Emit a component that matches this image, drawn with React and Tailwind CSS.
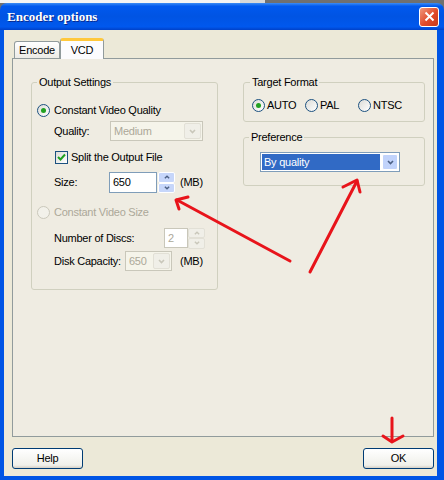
import React from 'react';

const font = "font-['Liberation_Sans',Arial,sans-serif]";

function Chevron({ dir = 'down', color = '#4D6185', size = 7 }) {
  const d = dir === 'down' ? 'M1 2 L3.5 4.5 L6 2' : 'M1 5 L3.5 2.5 L6 5';
  return (
    <svg width={size} height={size} viewBox="0 0 7 7">
      <path d={d} fill="none" stroke={color} strokeWidth="1.6" />
    </svg>
  );
}

function Radio({ checked, disabled }) {
  return (
    <span
      className={`w-[13px] h-[13px] rounded-full border flex items-center justify-center shrink-0 ${
        disabled
          ? 'border-[#CAC8BB] bg-[#F2F1EA]'
          : 'border-[#1C5180] bg-[linear-gradient(135deg,#DCDCD7,#FFFFFF)]'
      }`}
    >
      {checked && <span className="w-[5px] h-[5px] rounded-full bg-[#21A121]" />}
    </span>
  );
}

function Checkbox() {
  return (
    <span className="w-[13px] h-[13px] border border-[#1C5180] bg-[linear-gradient(135deg,#DCDCD7,#FFFFFF)] flex items-center justify-center shrink-0">
      <svg width="9" height="9" viewBox="0 0 9 9">
        <path d="M1 4 L3.5 6.5 L8 1.5" fill="none" stroke="#21A121" strokeWidth="2" />
      </svg>
    </span>
  );
}

function Combo({ value, width, disabled }) {
  return (
    <div
      className={`h-[20px] border flex items-stretch ${
        disabled ? 'border-[#C9C7BA] bg-[#F5F4EA]' : 'border-[#7F9DB9] bg-white'
      }`}
      style={{ width }}
    >
      <div className={`flex-1 flex items-center pl-[3px] ${disabled ? 'text-[#ACA899]' : ''}`}>{value}</div>
      <div
        className={`w-[17px] m-px rounded-[2px] flex items-center justify-center ${
          disabled ? 'bg-[#F0EFE8] border border-[#E2E0D6]' : 'bg-[#C1D3FB] border border-white'
        }`}
      >
        <Chevron color={disabled ? '#C9C7BA' : '#4D6185'} />
      </div>
    </div>
  );
}

function Spin({ disabled }) {
  const cls = disabled
    ? 'bg-[#F0EFE8] border border-[#E2E0D6]'
    : 'bg-[#C6D6FA] border border-white';
  const c = disabled ? '#C9C7BA' : '#4D6185';
  return (
    <div className="w-[17px] h-[21px] flex flex-col">
      <div className={`flex-1 rounded-[2px] flex items-center justify-center ${cls}`}>
        <Chevron dir="up" color={c} size={6} />
      </div>
      <div className={`flex-1 rounded-[2px] flex items-center justify-center ${cls}`}>
        <Chevron dir="down" color={c} size={6} />
      </div>
    </div>
  );
}

function XpButton({ children }) {
  return (
    <div className="w-[71px] h-[21px] rounded-[3px] border border-[#003C74] bg-[linear-gradient(to_bottom,#FFFFFF,#F0F0EA_85%,#D6D0C5)] flex items-center justify-center">
      {children}
    </div>
  );
}

export default function App() {
  return (
    <div className={`w-[444px] h-[480px] relative flex flex-col bg-[#707070] text-[11px] tracking-[-0.25px] text-black ${font}`}>
      <div className="h-[3px] flex">
        <div className="w-[240px] bg-[#F4F4F4]" />
        <div className="w-[25px] bg-[#D8D8D8]" />
        <div className="flex-1 bg-[#707070]" />
      </div>

      <div className="flex-1 flex flex-col rounded-t-[7px] overflow-hidden">
        {/* title bar */}
        <div className="h-[27px] flex items-center justify-between pl-[7px] pr-[5px] bg-[linear-gradient(to_bottom,#3B8CF5_0%,#0058EE_12%,#0054E3_50%,#0058EE_88%,#0041C8_100%)]">
          <span className="font-['Liberation_Serif',serif] font-bold text-[13px] tracking-normal text-white [text-shadow:1px_1px_0_#0A2A8E]">
            Encoder options
          </span>
          <div className="w-[20px] h-[20px] rounded-[3px] border border-white bg-[linear-gradient(135deg,#F0997E,#E04A2A_55%,#C7391A)] flex items-center justify-center">
            <svg width="11" height="11" viewBox="0 0 11 11">
              <path d="M1.5 1.5 L9.5 9.5 M9.5 1.5 L1.5 9.5" stroke="white" strokeWidth="2" />
            </svg>
          </div>
        </div>

        {/* client */}
        <div className="flex-1 flex flex-col bg-[#ECE9D8] border-l-[4px] border-r-[7px] border-b-[4px] border-[#0055E5] pt-[8px] pl-[8px] pr-[3px]">
          {/* tabs */}
          <div className="h-[20px] flex items-end pl-[2px] relative z-10">
            <div className="w-[46px] h-[17px] border border-b-0 border-[#919B9C] rounded-t-[3px] bg-[linear-gradient(to_bottom,#FFFFFF,#ECEBE6)] flex items-center justify-center">
              Encode
            </div>
            <div className="w-[44px] h-[21px] -mb-px border-x border-[#919B9C] border-t-[3px] border-t-[#FFC83C] rounded-t-[3px] bg-[#FCFCFE] flex items-start justify-center pt-[1px]">
              VCD
            </div>
          </div>

          {/* panel */}
          <div className="h-[379px] border border-[#919B9C] bg-[#EFECE2] flex pt-[17px] pl-[18px]">
            <fieldset className="w-[187px] h-[214px] border border-[#D0D0BF] rounded-[3px]">
              <legend className="ml-[5px] px-[2px] leading-[13px]">Output Settings</legend>
              <div className="flex flex-col">
                <div className="h-[20px] mt-[11px] flex items-center pl-[5px] gap-[4px]">
                  <Radio checked />
                  <span>Constant Video Quality</span>
                </div>
                <div className="h-[20px] mt-[1px] flex items-center pl-[22px]">
                  <span className="w-[56px]">Quality:</span>
                  <Combo value="Medium" width={93} disabled />
                </div>
                <div className="h-[20px] mt-[6px] flex items-center pl-[23px] gap-[3px]">
                  <Checkbox />
                  <span>Split the Output File</span>
                </div>
                <div className="h-[21px] mt-[5px] flex items-center pl-[22px]">
                  <span className="w-[55px]">Size:</span>
                  <div className="w-[48px] h-[21px] border border-[#7F9DB9] bg-white flex items-center pl-[3px]">650</div>
                  <div className="ml-px"><Spin /></div>
                  <span className="ml-[5px]">(MB)</span>
                </div>
                <div className="h-[20px] mt-[9px] flex items-center pl-[5px] gap-[4px] text-[#ACA899]">
                  <Radio disabled />
                  <span>Constant Video Size</span>
                </div>
                <div className="h-[20px] mt-[6px] flex items-center pl-[22px]">
                  <span className="w-[110px]">Number of Discs:</span>
                  <div className="w-[24px] h-[20px] border border-[#C9C7BA] bg-white flex items-center pl-[3px] text-[#ACA899]">2</div>
                  <Spin disabled />
                </div>
                <div className="h-[20px] mt-[3px] flex items-center pl-[22px]">
                  <span className="w-[71px]">Disk Capacity:</span>
                  <Combo value="650" width={47} disabled />
                  <span className="ml-[8px]">(MB)</span>
                </div>
              </div>
            </fieldset>

            <div className="ml-[25px] w-[182px] flex flex-col">
              <fieldset className="h-[46px] border border-[#D0D0BF] rounded-[3px]">
                <legend className="ml-[6px] px-[2px] leading-[13px]">Target Format</legend>
                <div className="h-[20px] mt-[6px] flex items-center pl-[8px]">
                  <div className="w-[53px] flex items-center gap-[2px]">
                    <Radio checked />
                    <span>AUTO</span>
                  </div>
                  <div className="w-[53px] flex items-center gap-[2px]">
                    <Radio />
                    <span>PAL</span>
                  </div>
                  <div className="flex items-center gap-[2px]">
                    <Radio />
                    <span>NTSC</span>
                  </div>
                </div>
              </fieldset>
              <fieldset className="mt-[9px] h-[55px] border border-[#D0D0BF] rounded-[3px]">
                <legend className="ml-[5px] px-[2px] leading-[13px]">Preference</legend>
                <div className="mt-[8px] ml-[16px] w-[140px] h-[20px] border border-[#7F9DB9] bg-white flex items-stretch p-px">
                  <div className="flex-1 bg-[#316AC5] text-white flex items-center pl-[2px] mr-[2px]">By quality</div>
                  <div className="w-[16px] rounded-[2px] bg-[#C1D3FB] border border-white flex items-center justify-center">
                    <Chevron />
                  </div>
                </div>
              </fieldset>
            </div>
          </div>

          <div className="mt-[11px] flex justify-between">
            <XpButton>Help</XpButton>
            <XpButton>OK</XpButton>
          </div>
        </div>
      </div>

      {/* red annotation arrows */}
      <svg className="absolute inset-0 pointer-events-none" width="444" height="480">
        <g stroke="#E8141B" strokeWidth="3" fill="none" strokeLinecap="round" strokeLinejoin="round">
          <path d="M290 261 L177 200" />
          <path d="M188 197 L176 200 L179 209" />
          <path d="M310 272 L357 181" />
          <path d="M343 187 L357 180 L360 192" />
          <path d="M392 418 L392 441" />
          <path d="M383 436 L392 442 L403 436" />
        </g>
      </svg>
    </div>
  );
}
